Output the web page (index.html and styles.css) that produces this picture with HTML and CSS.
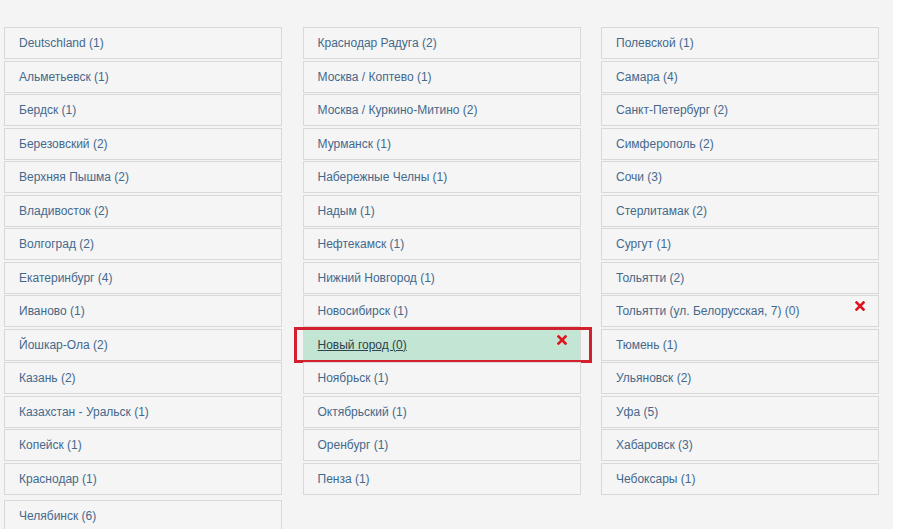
FILE: index.html
```html
<!DOCTYPE html>
<html lang="ru">
<head>
  <meta charset="UTF-8">
  <meta name="viewport" content="width=device-width, initial-scale=1">
  <title>Города</title>
  <link rel="stylesheet" href="styles.css">
</head>
<body>

  <div class="page">
    <div class="city-grid">

      <ul class="city-col">
        <li class="city"><a href="#">Deutschland (1)</a></li>
        <li class="city"><a href="#">Альметьевск (1)</a></li>
        <li class="city"><a href="#">Бердск (1)</a></li>
        <li class="city"><a href="#">Березовский (2)</a></li>
        <li class="city"><a href="#">Верхняя Пышма (2)</a></li>
        <li class="city"><a href="#">Владивосток (2)</a></li>
        <li class="city"><a href="#">Волгоград (2)</a></li>
        <li class="city"><a href="#">Екатеринбург (4)</a></li>
        <li class="city"><a href="#">Иваново (1)</a></li>
        <li class="city"><a href="#">Йошкар-Ола (2)</a></li>
        <li class="city"><a href="#">Казань (2)</a></li>
        <li class="city"><a href="#">Казахстан - Уральск (1)</a></li>
        <li class="city"><a href="#">Копейск (1)</a></li>
        <li class="city"><a href="#">Краснодар (1)</a></li>
        <li class="city city-last"><a href="#">Челябинск (6)</a></li>
      </ul>

      <ul class="city-col">
        <li class="city"><a href="#">Краснодар Радуга (2)</a></li>
        <li class="city"><a href="#">Москва / Коптево (1)</a></li>
        <li class="city"><a href="#">Москва / Куркино-Митино (2)</a></li>
        <li class="city"><a href="#">Мурманск (1)</a></li>
        <li class="city"><a href="#">Набережные Челны (1)</a></li>
        <li class="city"><a href="#">Надым (1)</a></li>
        <li class="city"><a href="#">Нефтекамск (1)</a></li>
        <li class="city"><a href="#">Нижний Новгород (1)</a></li>
        <li class="city"><a href="#">Новосибирск (1)</a></li>
        <li class="city city-new">
          <a href="#">Новый город (0)</a>
          <span class="remove">
            <svg width="10" height="10" viewBox="0 0 10 10">
              <path d="M1.5 1.5 8.5 8.5M8.5 1.5 1.5 8.5" stroke="#e0141e" stroke-width="2.6" stroke-linecap="square" fill="none"/>
            </svg>
          </span>
        </li>
        <li class="city"><a href="#">Ноябрьск (1)</a></li>
        <li class="city"><a href="#">Октябрьский (1)</a></li>
        <li class="city"><a href="#">Оренбург (1)</a></li>
        <li class="city"><a href="#">Пенза (1)</a></li>
      </ul>

      <ul class="city-col">
        <li class="city"><a href="#">Полевской (1)</a></li>
        <li class="city"><a href="#">Самара (4)</a></li>
        <li class="city"><a href="#">Санкт-Петербург (2)</a></li>
        <li class="city"><a href="#">Симферополь (2)</a></li>
        <li class="city"><a href="#">Сочи (3)</a></li>
        <li class="city"><a href="#">Стерлитамак (2)</a></li>
        <li class="city"><a href="#">Сургут (1)</a></li>
        <li class="city"><a href="#">Тольятти (2)</a></li>
        <li class="city">
          <a href="#">Тольятти (ул. Белорусская, 7) (0)</a>
          <span class="remove">
            <svg width="10" height="10" viewBox="0 0 10 10">
              <path d="M1.5 1.5 8.5 8.5M8.5 1.5 1.5 8.5" stroke="#e0141e" stroke-width="2.6" stroke-linecap="square" fill="none"/>
            </svg>
          </span>
        </li>
        <li class="city"><a href="#">Тюмень (1)</a></li>
        <li class="city"><a href="#">Ульяновск (2)</a></li>
        <li class="city"><a href="#">Уфа (5)</a></li>
        <li class="city"><a href="#">Хабаровск (3)</a></li>
        <li class="city"><a href="#">Чебоксары (1)</a></li>
      </ul>

    </div>
  </div>

</body>
</html>
```

FILE: styles.css
```css
body {
  margin: 0;
  padding: 0;
  background: #fff;
  font-family: "Liberation Sans", Arial, sans-serif;
}

.page {
  width: 893px;
  min-height: 100vh;
  background: #f4f4f4;
  overflow: hidden;
}

.city-grid {
  display: grid;
  grid-template-columns: 278px 278px 278px;
  column-gap: 20.5px;
  padding: 27px 0 0 4px;
}

.city-col {
  list-style: none;
  margin: 0;
  padding: 0;
}

.city {
  position: relative;
  box-sizing: border-box;
  height: 32px;
  margin-bottom: 1.5px;
  padding-left: 14px;
  border: 1px solid #d8d8d8;
  background: #f5f5f5;
  font-size: 12px;
  line-height: 30px;
}

.city a {
  color: #44698c;
  text-decoration: none;
}

.city-last {
  margin-top: 5px;
}

.remove {
  position: absolute;
  top: 5px;
  right: 13px;
  line-height: 0;
}

/* highlighted new city */
.city-new {
  background: #c3e6d4;
}

.city-new a {
  color: #2f3f4c;
  text-decoration: underline;
}

.city-new::after {
  content: "";
  position: absolute;
  left: -10px;
  right: -12px;
  top: -3px;
  bottom: -3px;
  border: 3px solid #d3202e;
  pointer-events: none;
}
```
